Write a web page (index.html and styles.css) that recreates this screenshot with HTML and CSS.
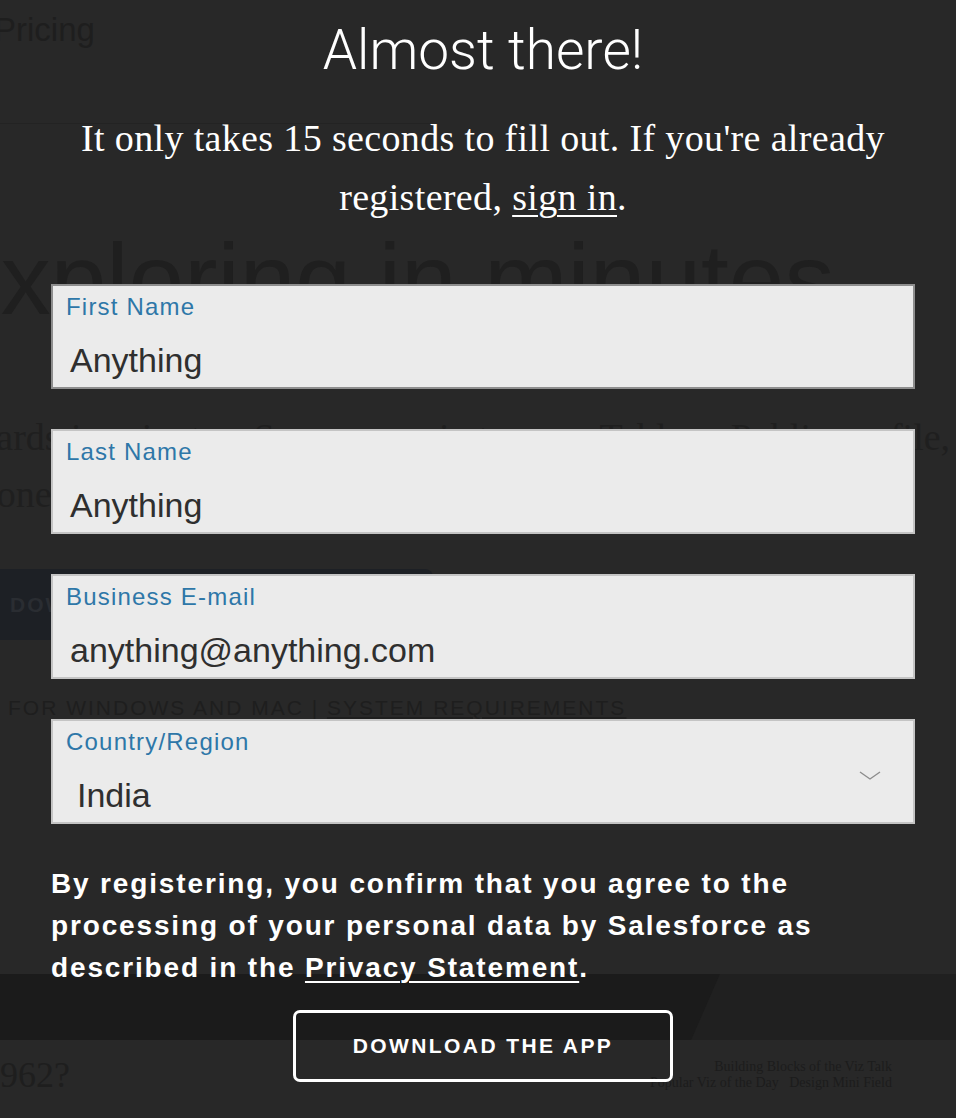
FILE: index.html
```html
<!DOCTYPE html>
<html lang="en">
<head>
<meta charset="utf-8">
<title>Almost there!</title>
<link rel="stylesheet" href="styles.css">
</head>
<body>
<div class="page">
  <div class="bg">
    <div class="bg-nav">Pricing</div>
    <div class="bg-rule"></div>
    <div class="bg-hero">Exploring in minutes</div>
    <p class="bg-copy">
      <span class="bg-copy-line">Create dashboards in minutes. Save your viz to your Tableau Public profile,</span>
      <span class="bg-copy-line bg-copy-line2">anyone can see it.</span>
    </p>
    <div class="bg-btn">DOWNLOAD THE APP</div>
    <div class="bg-note">FOR WINDOWS AND MAC | <span class="bg-u">SYSTEM REQUIREMENTS</span></div>
    <div class="bg-band"><div class="bg-band-shape"></div></div>
    <div class="bg-foot">
      <span class="bg-foot-q">1962?</span>
      <span class="bg-foot-small">Building Blocks of the Viz Talk<br>Popular Viz of the Day &nbsp; Design Mini Field</span>
    </div>
  </div>

  <div class="overlay">
    <div class="modal">
      <h1 class="title">Almost there!</h1>
      <p class="lead">It only takes 15 seconds to fill out. If you're already registered, <a class="lead-link" href="#">sign in</a>.</p>
      <form class="form">
        <label class="field field-focus">
          <span class="field-label">First Name</span>
          <span class="field-value">Anything</span>
        </label>
        <label class="field">
          <span class="field-label">Last Name</span>
          <span class="field-value">Anything</span>
        </label>
        <label class="field">
          <span class="field-label">Business E-mail</span>
          <span class="field-value">anything@anything.com</span>
        </label>
        <label class="field field-select">
          <span class="field-label">Country/Region</span>
          <span class="field-row">
            <span class="field-value field-value-select">India</span>
            <svg class="chevron" width="22" height="10" viewBox="0 0 22 10" aria-hidden="true"><polyline points="1,1 11,8 21,1" fill="none" stroke="#8c8c8c" stroke-width="1.4"/></svg>
          </span>
        </label>
        <p class="consent">By registering, you confirm that you agree to the processing of your personal data by Salesforce as described in the <a class="consent-link" href="#">Privacy Statement</a>.</p>
        <div class="actions">
          <button class="cta" type="button">DOWNLOAD THE APP</button>
        </div>
      </form>
    </div>
  </div>
</div>
</body>
</html>
```

FILE: styles.css
```css
html, body {
  margin: 0;
  padding: 0;
}
body {
  background: #282828;
  width: 956px;
  height: 1118px;
  overflow: hidden;
  font-family: "Liberation Sans", Arial, sans-serif;
}
.page {
  position: relative;
  width: 956px;
  height: 1118px;
  overflow: hidden;
}

/* dimmed page behind the modal */
.bg {
  display: flex;
  flex-direction: column;
  color: #1f1f1f;
}
.bg-nav {
  font-size: 33px;
  line-height: 40px;
  margin: 10px 0 0 -6px;
  color: #1e1e1e;
}
.bg-rule {
  width: 430px;
  height: 1px;
  background: #232323;
  margin-top: 73px;
}
.bg-hero {
  font-family: "Liberation Sans", Arial, sans-serif;
  font-weight: 300;
  font-size: 100px;
  line-height: 110px;
  margin: 100px 0 0 -66px;
  white-space: nowrap;
  color: #1f1f1f;
}
.bg-copy {
  display: flex;
  flex-direction: column;
  font-family: "Liberation Serif", "Times New Roman", serif;
  font-size: 38px;
  line-height: 57px;
  margin: 75px 0 0 0;
  white-space: nowrap;
  color: #1f1f1f;
}
.bg-copy-line {
  margin-left: -222px;
  word-spacing: 2px;
}
.bg-copy-line2 {
  margin-left: -58px;
}
.bg-btn {
  width: 433px;
  height: 71px;
  margin-top: 46px;
  background: #1d2025;
  border-radius: 0 8px 8px 0;
  box-sizing: border-box;
  padding-left: 10px;
  display: flex;
  align-items: center;
  font-weight: 700;
  font-size: 21px;
  letter-spacing: 2px;
  color: #2a2d32;
  white-space: nowrap;
  overflow: hidden;
}
.bg-note {
  margin: 56px 0 0 8px;
  font-size: 21px;
  line-height: 24px;
  letter-spacing: 2px;
  color: #1e1e1e;
  white-space: nowrap;
}
.bg-u {
  text-decoration: underline;
}
.bg-band {
  height: 66px;
  margin-top: 254px;
  background: #202020;
  position: relative;
  overflow: hidden;
}
.bg-band-shape {
  position: absolute;
  left: 0;
  top: 0;
  bottom: 0;
  width: 720px;
  background: #1b1b1b;
  clip-path: polygon(0 0, 100% 0, 96% 100%, 0 100%);
}
.bg-foot {
  display: flex;
  align-items: flex-start;
  margin-top: 13px;
}
.bg-foot-q {
  font-family: "Liberation Serif", "Times New Roman", serif;
  font-size: 36px;
  line-height: 44px;
  margin-left: -18px;
  color: #1e1e1e;
}
.bg-foot-small {
  font-family: "Liberation Serif", "Times New Roman", serif;
  font-size: 14px;
  line-height: 16px;
  margin: 6px 0 0 580px;
  color: #1c1c1c;
  text-align: right;
  white-space: nowrap;
}

/* overlay + modal */
.overlay {
  position: absolute;
  inset: 0;
}
.modal {
  box-sizing: border-box;
  padding: 0 41px 0 51px;
  display: flex;
  flex-direction: column;
}
.title {
  margin: 18px 0 0;
  text-align: center;
  font-family: Roboto, "Liberation Sans", sans-serif;
  font-weight: 300;
  font-size: 55px;
  line-height: 64px;
  color: #ffffff;
}
.lead {
  margin: 27px 0 0;
  padding: 0 10px;
  text-align: center;
  font-family: "Liberation Serif", "Times New Roman", serif;
  font-size: 38px;
  line-height: 59px;
  color: #ffffff;
  letter-spacing: 0.35px;
}
.lead-link {
  color: #ffffff;
  text-decoration: underline;
  text-decoration-thickness: 2px;
  text-underline-offset: 5px;
}
.form {
  display: flex;
  flex-direction: column;
  gap: 40px;
  margin-top: 57px;
}
.field {
  box-sizing: border-box;
  height: 105px;
  background: #ebebeb;
  border: 2px solid #c4c4c4;
  display: flex;
  flex-direction: column;
  padding: 8px 0 0 13px;
}
.field-focus {
  border-color: #8e8e8e;
}
.field-label {
  font-family: "Liberation Sans", Arial, sans-serif;
  font-size: 24px;
  line-height: 26px;
  letter-spacing: 1.2px;
  color: #2e77a8;
}
.field-value {
  margin-top: 21px;
  padding-left: 4px;
  font-family: "Liberation Sans", Arial, sans-serif;
  font-size: 34px;
  line-height: 38px;
  color: #2f2f2f;
}
.field-row {
  display: flex;
  align-items: center;
  justify-content: space-between;
  padding-right: 32px;
}
.field-value-select {
  padding-left: 11px;
}
.chevron {
  display: block;
  margin-top: -18px;
}
.consent {
  margin: -1px 0 0;
  font-family: "Liberation Sans", Arial, sans-serif;
  font-weight: 700;
  font-size: 28px;
  line-height: 42px;
  letter-spacing: 1.85px;
  color: #ffffff;
}
.consent-link {
  color: #ffffff;
  text-decoration: underline;
  text-decoration-thickness: 2px;
  text-underline-offset: 4px;
}
.actions {
  display: flex;
  justify-content: center;
  margin-top: -19px;
}
.cta {
  width: 380px;
  height: 72px;
  background: transparent;
  border: 3px solid #ffffff;
  border-radius: 7px;
  color: #ffffff;
  font-family: "Liberation Sans", Arial, sans-serif;
  font-weight: 700;
  font-size: 21px;
  letter-spacing: 2.4px;
  cursor: pointer;
}
```
